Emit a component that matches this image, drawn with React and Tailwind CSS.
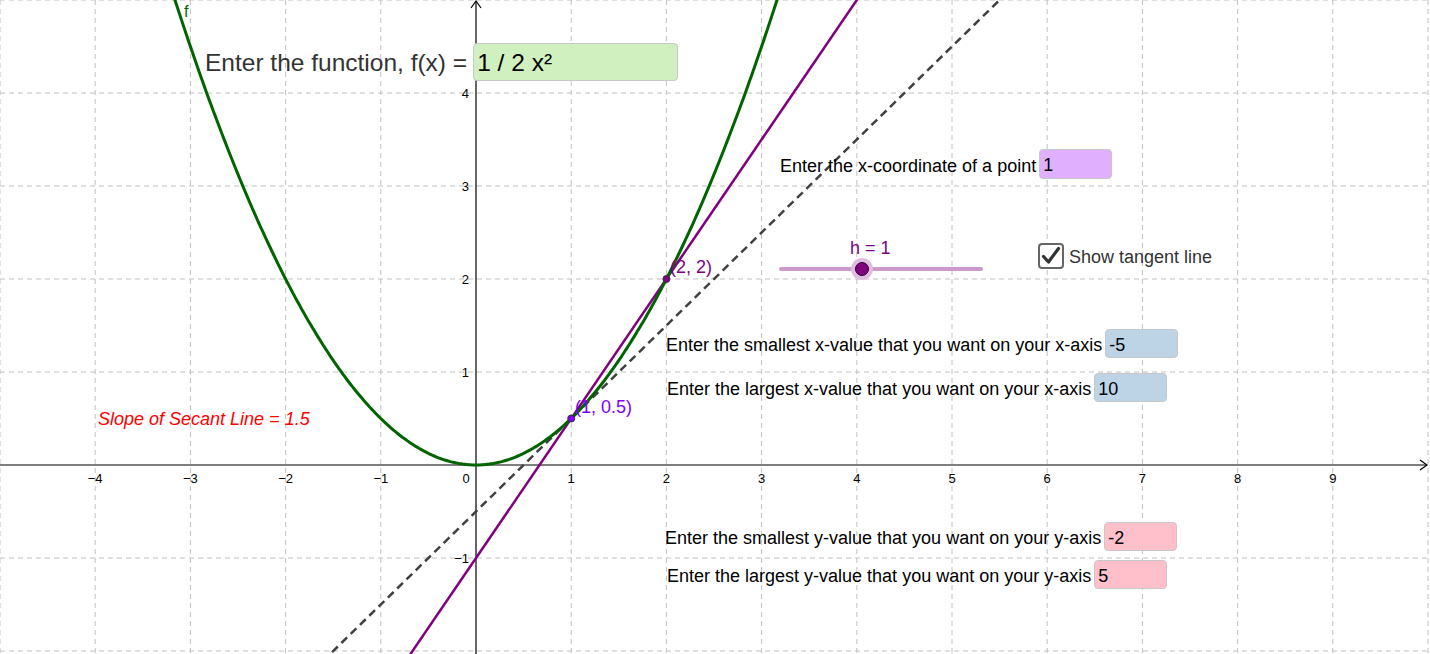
import React from 'react';

// graph space -> screen px
const X = (x) => 476 + 95.2 * x;
const Y = (y) => 465 - 93 * y;

const parabola = (() => {
    const pts = [];
    for (let x = -3.3; x <= 3.3; x += 0.02) {
        pts.push(`${X(x).toFixed(1)},${Y((x * x) / 2).toFixed(1)}`);
    }
    return pts.join(' ');
})();

// label + coloured input box, as GeoGebra draws them
const InputField = ({ label, value, bg, left, top, width = 73, height = 29, size = 'text-[18px]', labelColor = 'text-black', gap = 'ml-[3px]' }) => (
    <div className="absolute flex items-center" style={{ left, top }}>
        <span className={`${size} ${labelColor} mt-[3px] whitespace-nowrap leading-none`}>{label}</span>
        <div
            className={`${gap} flex items-center rounded-[4px] border border-[#c8c8c8] pl-[3px] pt-[3px] ${bg} ${size} text-black`}
            style={{ width, height }}
        >
            {value}
        </div>
    </div>
);

const Graph = () => {
    const vLines = [];
    for (let k = -5; k <= 10; k++) if (k !== 0) vLines.push(X(k));
    const hLines = [];
    for (let k = -2; k <= 5; k++) if (k !== 0) hLines.push(Y(k));
    const xTicks = [-4, -3, -2, -1, 1, 2, 3, 4, 5, 6, 7, 8, 9];
    const yTicks = [-1, 1, 2, 3, 4];
    const fmt = (n) => (n < 0 ? `\u2212${-n}` : `${n}`);

    return (
        <svg width="1430" height="654" className="absolute left-0 top-0" style={{ fontFamily: '"Liberation Sans", Arial, sans-serif' }}>
            {/* grid */}
            <g stroke="#c0c0c0" strokeWidth="1" strokeDasharray="5 4">
                {vLines.map((x) => (
                    <line key={`v${x}`} x1={x} y1="0" x2={x} y2="654" />
                ))}
                {hLines.map((y) => (
                    <line key={`h${y}`} x1="0" y1={y} x2="1430" y2={y} />
                ))}
            </g>

            {/* axes */}
            <g stroke="#000" strokeWidth="1.2" fill="none">
                <line x1="0" y1="465" x2="1427" y2="465" />
                <polyline points="1420,460 1427,465 1420,470" />
                <line x1="476" y1="654" x2="476" y2="1" />
                <polyline points="471,8 476,1 481,8" />
            </g>

            {/* tick labels */}
            <g fontSize="13" fill="#000">
                {xTicks.map((k) => (
                    <text key={`xt${k}`} x={X(k)} y="483" textAnchor="middle">{fmt(k)}</text>
                ))}
                <text x="466" y="483" textAnchor="middle">0</text>
                {yTicks.map((k) => (
                    <text key={`yt${k}`} x="469" y={Y(k) + 5} textAnchor="end">{fmt(k)}</text>
                ))}
            </g>

            {/* tangent line y = x - 0.5 */}
            <line x1={X(-2)} y1={Y(-2.5)} x2={X(6)} y2={Y(5.5)} stroke="#404040" strokeWidth="2.5" strokeDasharray="8 5" />

            {/* secant line y = 1.5x - 1 */}
            <line x1={X(-1)} y1={Y(-2.5)} x2={X(4.5)} y2={Y(5.75)} stroke="#800080" strokeWidth="2.5" />

            {/* f(x) = x^2 / 2 */}
            <polyline points={parabola} fill="none" stroke="#006400" strokeWidth="3" />
            <text x="184" y="17" fontSize="16" fill="#006400">f</text>

            {/* points */}
            <circle cx={X(1)} cy={Y(0.5)} r="3.5" fill="#7f00ff" stroke="#333" strokeWidth="1" />
            <circle cx={X(2)} cy={Y(2)} r="3.5" fill="#800080" stroke="#333" strokeWidth="1" />
            <text x="575" y="413" fontSize="18" fill="#7f00ff">(1, 0.5)</text>
            <text x="670" y="273" fontSize="18" fill="#800080">(2, 2)</text>

            {/* slope readout */}
            <text x="98" y="425" fontSize="18" fontStyle="italic" fill="#ff0000">Slope of Secant Line = 1.5</text>
        </svg>
    );
};

const Slider = () => (
    <>
        <span className="absolute left-[850px] top-[239px] text-[18px] leading-none text-[#800080]">h = 1</span>
        <div className="absolute left-[779px] top-[267px] h-[4px] w-[204px] rounded-full bg-[#cc99cc]" />
        <div className="absolute left-[851px] top-[258px] flex h-[22px] w-[22px] items-center justify-center rounded-full bg-[#e0bde0]">
            <div className="h-[14px] w-[14px] rounded-full border-[1.5px] border-[#2a002a] bg-[#800080]" />
        </div>
    </>
);

const TangentCheckbox = () => (
    <div className="absolute left-[1038px] top-[243px] flex items-center">
        <div className="flex h-[26px] w-[26px] items-center justify-center rounded-[4px] border-2 border-[#666] bg-white">
            <svg width="22" height="22" viewBox="0 0 22 22">
                <path d="M3.5 11.5 L8.5 17 L18.5 3.5" fill="none" stroke="#333" strokeWidth="3.2" strokeLinecap="round" strokeLinejoin="round" />
            </svg>
        </div>
        <span className="ml-[5px] mt-[2px] text-[18px] leading-none text-[#333]">Show tangent line</span>
    </div>
);

export default function App() {
    return (
        <div className="relative h-[654px] w-[1430px] overflow-hidden bg-white font-['Liberation_Sans',Arial,sans-serif]">
            <Graph />

            <InputField
                label="Enter the function, f(x) ="
                value="1 / 2 x²"
                bg="bg-[#d0f0c0]"
                left={205}
                top={43}
                width={205}
                height={38}
                size="text-[24.5px]"
                labelColor="text-[#333]"
                gap="ml-[6px]"
            />
            <InputField label="Enter the x-coordinate of a point" value="1" bg="bg-[#e0b0ff]" left={780} top={149} height={30} />

            <Slider />
            <TangentCheckbox />

            <InputField label="Enter the smallest x-value that you want on your x-axis" value="-5" bg="bg-[#bcd4e6]" left={666} top={329} />
            <InputField label="Enter the largest x-value that you want on your x-axis" value="10" bg="bg-[#bcd4e6]" left={667} top={373} />
            <InputField label="Enter the smallest y-value that you want on your y-axis" value="-2" bg="bg-[#ffc0cb]" left={665} top={522} />
            <InputField label="Enter the largest y-value that you want on your y-axis" value="5" bg="bg-[#ffc0cb]" left={667} top={560} />
        </div>
    );
}
